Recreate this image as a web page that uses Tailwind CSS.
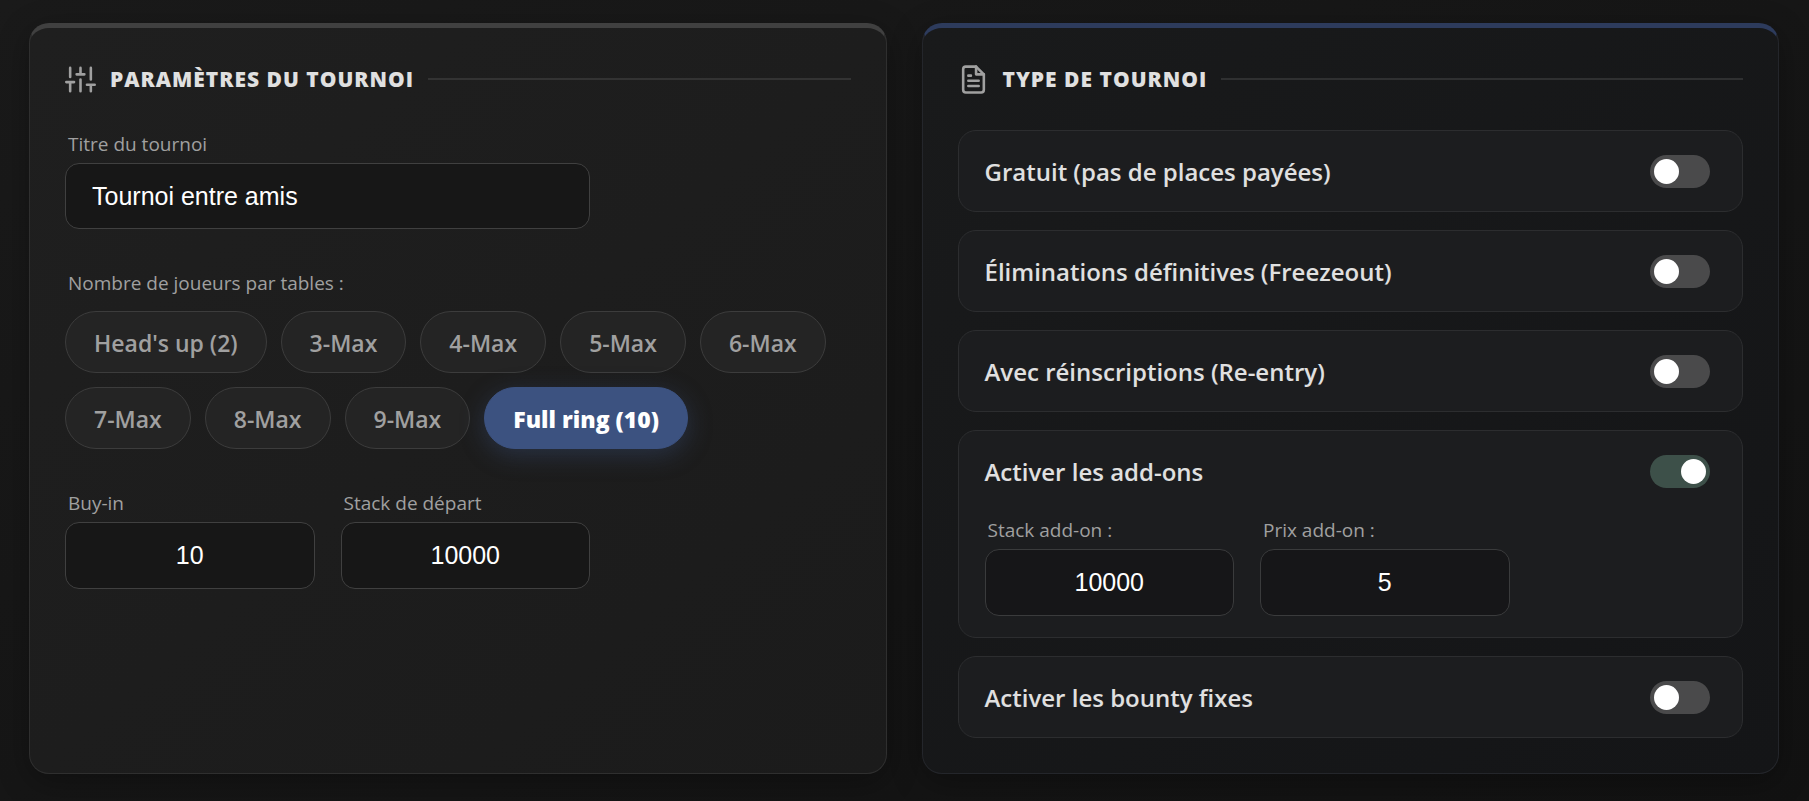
<!DOCTYPE html>
<html lang="fr">
<head>
    <meta charset="UTF-8">
    <meta name="viewport" content="width=device-width, initial-scale=1.0">
    <title>Paramètres du tournoi</title>
    <script src="https://cdn.jsdelivr.net/npm/@tailwindcss/browser@4"></script>
</head>
<body class="min-h-screen bg-linear-to-br from-[#1a1a1a] to-[#121212] font-['Segoe_UI','Open_Sans',sans-serif]">
    <main class="grid grid-cols-1 lg:grid-cols-2 gap-[35px] pl-[29px] pr-[30px] pt-[23px] pb-[27px]">

        <!-- Paramètres -->
        <section class="rounded-[20px] border border-t-5 border-[#2f2f2f] border-t-[#404040] bg-linear-to-br from-[#1f1f1f] to-[#1b1b1b] p-[35px] shadow-[0_8px_32px_rgba(0,0,0,0.3)]">
            <header class="flex items-center gap-3.5 h-8 mb-[35px]">
                <svg class="size-[31px] shrink-0 text-[#a0a0a0]" viewBox="0 0 24 24" fill="none" stroke="currentColor" stroke-width="2" stroke-linecap="round" stroke-linejoin="round" aria-hidden="true">
                    <path d="M4 21v-7M4 10V3M12 21v-9M12 8V3M20 21v-5M20 12V3M1 14h6M9 8h6M17 16h6"/>
                </svg>
                <h2 class="pt-0.5 text-[21px] font-extrabold tracking-[1px] uppercase text-[#e0e0e0] whitespace-nowrap">Paramètres du tournoi</h2>
                <div class="flex-1 h-0.5 bg-[#333333]"></div>
            </header>

            <div class="max-w-[525px] mb-10">
                <label for="titre" class="block pl-[3px] mb-1 text-[19px] leading-[29px] text-[#a0a0a0]">Titre du tournoi</label>
                <input id="titre" type="text" value="Tournoi entre amis" class="w-full h-[66px] px-[26px] rounded-[14px] border border-[#404040] bg-[#171717] font-['Liberation_Sans',Arial,sans-serif] text-[25px] text-white">
            </div>

            <div class="mb-10">
                <p id="joueurs" class="pl-[3px] mb-[13px] text-[19px] leading-[29px] text-[#a0a0a0]">Nombre de joueurs par tables :</p>
                <div role="group" aria-labelledby="joueurs" class="flex flex-wrap gap-3.5 text-[23px] font-semibold text-[#a0a0a0]">
                    <button type="button" class="h-[62px] px-7 pt-0.5 rounded-full border border-[#3c3c3c] bg-[#242424]">Head's up (2)</button>
                    <button type="button" class="h-[62px] px-7 pt-0.5 rounded-full border border-[#3c3c3c] bg-[#242424]">3-Max</button>
                    <button type="button" class="h-[62px] px-7 pt-0.5 rounded-full border border-[#3c3c3c] bg-[#242424]">4-Max</button>
                    <button type="button" class="h-[62px] px-7 pt-0.5 rounded-full border border-[#3c3c3c] bg-[#242424]">5-Max</button>
                    <button type="button" class="h-[62px] px-7 pt-0.5 rounded-full border border-[#3c3c3c] bg-[#242424]">6-Max</button>
                    <button type="button" class="h-[62px] px-7 pt-0.5 rounded-full border border-[#3c3c3c] bg-[#242424]">7-Max</button>
                    <button type="button" class="h-[62px] px-7 pt-0.5 rounded-full border border-[#3c3c3c] bg-[#242424]">8-Max</button>
                    <button type="button" class="h-[62px] px-7 pt-0.5 rounded-full border border-[#3c3c3c] bg-[#242424]">9-Max</button>
                    <button type="button" aria-pressed="true" class="h-[62px] px-7 pt-0.5 rounded-full border border-[#3c5280] bg-[#3c5280] font-extrabold text-white shadow-[0_6px_24px_rgba(60,82,128,0.4)]">Full ring (10)</button>
                </div>
            </div>

            <div class="grid grid-cols-2 gap-[26px] max-w-[525px]">
                <div>
                    <label for="buyin" class="block pl-[3px] mb-1 text-[19px] leading-[29px] text-[#a0a0a0]">Buy-in</label>
                    <input id="buyin" type="text" inputmode="numeric" value="10" class="w-full h-[67px] rounded-[14px] border border-[#404040] bg-[#171717] font-['Liberation_Sans',Arial,sans-serif] text-[25px] text-center text-white">
                </div>
                <div>
                    <label for="stack" class="block pl-[3px] mb-1 text-[19px] leading-[29px] text-[#a0a0a0]">Stack de départ</label>
                    <input id="stack" type="text" inputmode="numeric" value="10000" class="w-full h-[67px] rounded-[14px] border border-[#404040] bg-[#171717] font-['Liberation_Sans',Arial,sans-serif] text-[25px] text-center text-white">
                </div>
            </div>
        </section>

        <!-- Type -->
        <section class="rounded-[20px] border border-t-5 border-[#24262b] border-t-[#2d3b5c] bg-linear-to-br from-[#191a1b] to-[#141517] p-[35px] shadow-[0_8px_32px_rgba(0,0,0,0.3)]">
            <header class="flex items-center gap-3.5 h-8 mb-[35px]">
                <svg class="size-[31px] shrink-0 text-[#a0a0a0]" viewBox="0 0 24 24" fill="none" stroke="currentColor" stroke-width="2" stroke-linecap="round" stroke-linejoin="round" aria-hidden="true">
                    <path d="M14 2H6a2 2 0 0 0-2 2v16a2 2 0 0 0 2 2h12a2 2 0 0 0 2-2V8z"/>
                    <path d="M14 2v6h6M16 13H8M16 17H8M10 9H8"/>
                </svg>
                <h2 class="pt-0.5 text-[21px] font-extrabold tracking-[1px] uppercase text-[#e0e0e0] whitespace-nowrap">Type de tournoi</h2>
                <div class="flex-1 h-0.5 bg-[#2f3031]"></div>
            </header>

            <div class="flex flex-col gap-[18px] text-[24px] font-semibold text-[#e0e0e0]">
                <div class="flex items-center justify-between h-[82px] pl-[26px] pr-8 rounded-[18px] border border-[#2c2d2f] bg-[#1c1d1f]">
                    <label for="gratuit" class="pt-0.5">Gratuit (pas de places payées)</label>
                    <input id="gratuit" type="checkbox" role="switch" class="appearance-none shrink-0 w-[60px] h-[33px] p-1 rounded-full bg-[#4a4a4b] checked:bg-[#3d5049] before:block before:size-[25px] before:rounded-full before:bg-white checked:before:ml-auto">
                </div>
                <div class="flex items-center justify-between h-[82px] pl-[26px] pr-8 rounded-[18px] border border-[#2c2d2f] bg-[#1c1d1f]">
                    <label for="freezeout" class="pt-0.5">Éliminations définitives (Freezeout)</label>
                    <input id="freezeout" type="checkbox" role="switch" class="appearance-none shrink-0 w-[60px] h-[33px] p-1 rounded-full bg-[#4a4a4b] checked:bg-[#3d5049] before:block before:size-[25px] before:rounded-full before:bg-white checked:before:ml-auto">
                </div>
                <div class="flex items-center justify-between h-[82px] pl-[26px] pr-8 rounded-[18px] border border-[#2c2d2f] bg-[#1c1d1f]">
                    <label for="reentry" class="pt-0.5">Avec réinscriptions (Re-entry)</label>
                    <input id="reentry" type="checkbox" role="switch" class="appearance-none shrink-0 w-[60px] h-[33px] p-1 rounded-full bg-[#4a4a4b] checked:bg-[#3d5049] before:block before:size-[25px] before:rounded-full before:bg-white checked:before:ml-auto">
                </div>
                <div class="pl-[26px] pr-8 pb-[21px] rounded-[18px] border border-[#2c2d2f] bg-[#1c1d1f]">
                    <div class="flex items-center justify-between h-20 mb-[5px]">
                        <label for="addons" class="pt-0.5">Activer les add-ons</label>
                        <input id="addons" type="checkbox" role="switch" checked class="appearance-none shrink-0 w-[60px] h-[33px] p-1 rounded-full bg-[#4a4a4b] checked:bg-[#3d5049] before:block before:size-[25px] before:rounded-full before:bg-white checked:before:ml-auto">
                    </div>
                    <div class="grid grid-cols-2 gap-[26px] max-w-[525px] font-normal">
                        <div>
                            <label for="stack-addon" class="block pl-[3px] mb-1 text-[19px] leading-[29px] text-[#a0a0a0]">Stack add-on :</label>
                            <input id="stack-addon" type="text" inputmode="numeric" value="10000" class="w-full h-[67px] rounded-[14px] border border-[#3a3b3c] bg-[#161618] font-['Liberation_Sans',Arial,sans-serif] text-[25px] text-center text-white">
                        </div>
                        <div>
                            <label for="prix-addon" class="block pl-[3px] mb-1 text-[19px] leading-[29px] text-[#a0a0a0]">Prix add-on :</label>
                            <input id="prix-addon" type="text" inputmode="numeric" value="5" class="w-full h-[67px] rounded-[14px] border border-[#3a3b3c] bg-[#161618] font-['Liberation_Sans',Arial,sans-serif] text-[25px] text-center text-white">
                        </div>
                    </div>
                </div>
                <div class="flex items-center justify-between h-[82px] pl-[26px] pr-8 rounded-[18px] border border-[#2c2d2f] bg-[#1c1d1f]">
                    <label for="bounty" class="pt-0.5">Activer les bounty fixes</label>
                    <input id="bounty" type="checkbox" role="switch" class="appearance-none shrink-0 w-[60px] h-[33px] p-1 rounded-full bg-[#4a4a4b] checked:bg-[#3d5049] before:block before:size-[25px] before:rounded-full before:bg-white checked:before:ml-auto">
                </div>
            </div>
        </section>
    </main>
</body>
</html>
